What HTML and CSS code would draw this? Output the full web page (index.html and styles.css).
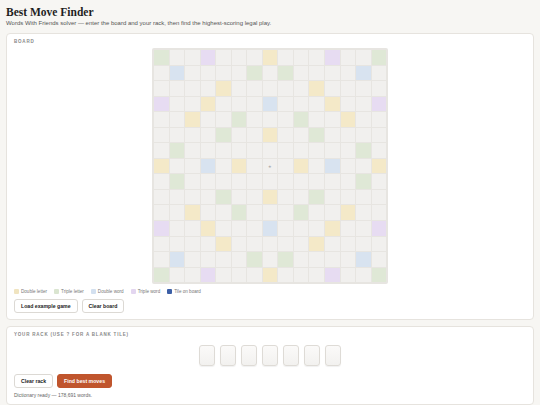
FILE: index.html
```html
<!DOCTYPE html>
<html>
<head>
  <meta charset="UTF-8">
  <meta name="viewport" content="width=device-width, initial-scale=1.0">
  <title>Best Move Finder</title>
  <link rel="stylesheet" href="styles.css">
</head>
<body>
  <h1>Best Move Finder</h1>
  <p class="subtitle">Words With Friends solver &mdash; enter the board and your rack, then find the highest-scoring legal play.</p>

  <section class="card">
    <div class="card-label">Board</div>
    <div class="board-wrap">
      <div class="board" id="board"></div>
    </div>

    <div class="legend">
      <span class="legend-item"><i class="swatch dl"></i>Double letter</span>
      <span class="legend-item"><i class="swatch tl"></i>Triple letter</span>
      <span class="legend-item"><i class="swatch dw"></i>Double word</span>
      <span class="legend-item"><i class="swatch tw"></i>Triple word</span>
      <span class="legend-item"><i class="swatch tile"></i>Tile on board</span>
    </div>

    <div class="actions">
      <button class="btn">Load example game</button>
      <button class="btn">Clear board</button>
    </div>
  </section>

  <section class="card">
    <div class="card-label">Your rack (use ? for a blank tile)</div>
    <div class="rack">
      <div class="rack-tile"></div>
      <div class="rack-tile"></div>
      <div class="rack-tile"></div>
      <div class="rack-tile"></div>
      <div class="rack-tile"></div>
      <div class="rack-tile"></div>
      <div class="rack-tile"></div>
    </div>
    <div class="actions rack-actions">
      <button class="btn">Clear rack</button>
      <button class="btn primary">Find best moves</button>
    </div>
    <p class="status">Dictionary ready &mdash; 178,691 words.</p>
  </section>

  <script>
    // premium squares for the top half, mirrored below
    const layout = [
      { 0: 'tl', 3: 'tw', 7: 'dl', 11: 'tw', 14: 'tl' },
      { 1: 'dw', 6: 'tl', 8: 'tl', 13: 'dw' },
      { 4: 'dl', 10: 'dl' },
      { 0: 'tw', 3: 'dl', 7: 'dw', 11: 'dl', 14: 'tw' },
      { 2: 'dl', 5: 'tl', 9: 'tl', 12: 'dl' },
      { 4: 'tl', 7: 'dl', 10: 'tl' },
      { 1: 'tl', 13: 'tl' },
      { 0: 'dl', 3: 'dw', 5: 'dl', 7: 'star', 9: 'dl', 11: 'dw', 14: 'dl' }
    ];

    const board = document.getElementById('board');
    for (let r = 0; r < 15; r++) {
      const row = layout[r < 8 ? r : 14 - r];
      for (let c = 0; c < 15; c++) {
        const cell = document.createElement('div');
        cell.className = 'cell';
        if (row[c] === 'star') {
          cell.classList.add('center');
          cell.textContent = '\u2605';
        } else if (row[c]) {
          cell.classList.add(row[c]);
        }
        board.appendChild(cell);
      }
    }
  </script>
</body>
</html>
```

FILE: styles.css
```css
body {
  margin: 0;
  padding: 5px 6px;
  background: #f7f6f3;
  color: #222;
  font-family: "Liberation Sans", Arial, sans-serif;
}

h1 {
  font-family: "Liberation Serif", "Times New Roman", serif;
  font-size: 11.5px;
  font-weight: bold;
  margin: 0;
  line-height: 14px;
  color: #1f1f1f;
}

.subtitle {
  font-size: 6px;
  line-height: 6px;
  color: #555;
  margin: 1px 0 7px;
}

.card {
  background: #fff;
  border: 1px solid #e6e3de;
  border-radius: 4px;
  padding: 5px 7px 6px;
  margin-bottom: 6px;
}

.card-label {
  font-size: 4.5px;
  line-height: 5px;
  font-weight: bold;
  letter-spacing: 0.8px;
  text-transform: uppercase;
  color: #888;
  margin-bottom: 4px;
}

.board-wrap {
  display: flex;
  justify-content: center;
}

.board {
  width: 236px;
  box-sizing: border-box;
  padding: 2px;
  background: #e7e5e1;
  border-radius: 2px;
  display: grid;
  grid-template-columns: repeat(15, 1fr);
  gap: 1px;
}

.cell {
  aspect-ratio: 1;
  background: #f1f0ee;
  display: flex;
  align-items: center;
  justify-content: center;
}

.cell.dl { background: #f4e9c8; }
.cell.tl { background: #dfe8d6; }
.cell.dw { background: #d8e3f0; }
.cell.tw { background: #e7dcf2; }

.cell.center {
  font-size: 4px;
  color: #aaa;
}

.legend {
  display: flex;
  gap: 7px;
  margin-top: 5px;
  font-size: 4.6px;
  line-height: 5px;
  color: #777;
}

.legend-item {
  display: flex;
  align-items: center;
  gap: 2px;
}

.swatch {
  width: 5px;
  height: 5px;
  border-radius: 1px;
}

.swatch.dl { background: #f0e4c0; }
.swatch.tl { background: #dae5d0; }
.swatch.dw { background: #d3e0ef; }
.swatch.tw { background: #e3d6f0; }
.swatch.tile { background: #3c5fa6; }

.actions {
  display: flex;
  gap: 4px;
  margin-top: 5px;
}

.btn {
  height: 14px;
  padding: 0 6px;
  background: #fff;
  border: 1px solid #dcd9d4;
  border-radius: 3px;
  font-family: "Liberation Sans", Arial, sans-serif;
  font-size: 5.2px;
  font-weight: bold;
  color: #222;
}

.btn.primary {
  background: #c0552d;
  border-color: #c0552d;
  color: #fff;
}

.rack {
  display: flex;
  justify-content: center;
  gap: 5px;
  margin-top: 8px;
}

.rack-tile {
  width: 16px;
  height: 21px;
  box-sizing: border-box;
  background: linear-gradient(to bottom, #fbfaf9, #f2f1ef);
  border: 1px solid #dedbd6;
  border-radius: 3px;
  box-shadow: 0 1px 1px rgba(0, 0, 0, 0.06);
}

.rack-actions {
  margin-top: 8px;
}

.status {
  font-size: 5px;
  line-height: 6px;
  color: #666;
  margin: 4px 0 0;
}
```
